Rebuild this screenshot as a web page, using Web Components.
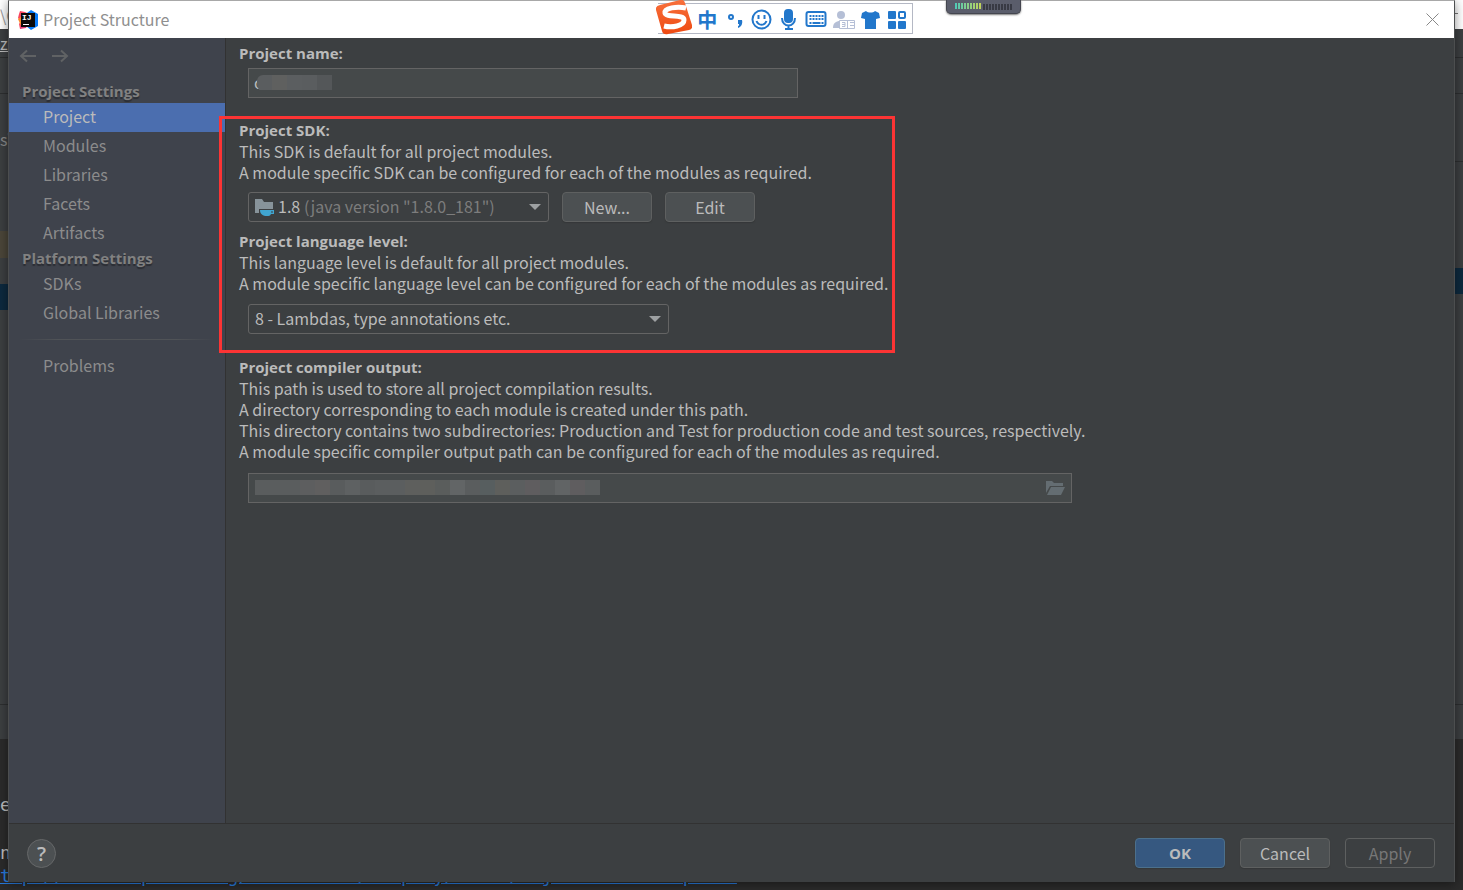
<!DOCTYPE html>
<html lang="en">
<head>
<meta charset="utf-8">
<meta name="viewport" content="width=device-width, initial-scale=1">
<title>Project Structure</title>
<style>
  * {
    box-sizing: border-box;
  }
  html {
    --panel: #3c3f41;
    --sidebar: #3f434c;
    --field: #45494a;
    --line: #646464;
    --rule: #323232;
    --text: #bbbbbb;
    --muted: #8c8c8c;
    --accent: #4b6eaf;
    --heading-font: "Open Sans", "Noto Sans", sans-serif;
  }
  body {
    margin: 0;
    position: relative;
    min-height: 100vh;
    overflow: hidden;
    background: var(--panel);
    color: var(--text);
    font: 16px/21px "Noto Sans CJK SC", "Noto Sans", sans-serif;
  }
</style>
</head>
<body>
<ide-backdrop></ide-backdrop>

<ps-dialog heading="Project Structure">
  <ps-sidebar slot="sidebar">
    <ps-nav-group heading="Project Settings">
      <ps-nav-item selected>Project</ps-nav-item>
      <ps-nav-item>Modules</ps-nav-item>
      <ps-nav-item>Libraries</ps-nav-item>
      <ps-nav-item>Facets</ps-nav-item>
      <ps-nav-item>Artifacts</ps-nav-item>
    </ps-nav-group>
    <ps-nav-group heading="Platform Settings">
      <ps-nav-item>SDKs</ps-nav-item>
      <ps-nav-item>Global Libraries</ps-nav-item>
    </ps-nav-group>
    <ps-nav-item slot="extra">Problems</ps-nav-item>
  </ps-sidebar>

  <ps-project-form></ps-project-form>

  <ps-button slot="actions" kind="primary">OK</ps-button>
  <ps-button slot="actions">Cancel</ps-button>
  <ps-button slot="actions" kind="disabled">Apply</ps-button>
</ps-dialog>

<ime-toolbar></ime-toolbar>
<level-meter></level-meter>

<script>
{
  const html = String.raw;

  // Attaches an open shadow root and fills it with the class's markup
  class ShadowElement extends HTMLElement {
    constructor() {
      super();
      this.attachShadow({ mode: "open" }).innerHTML = html`
        <style>
          *, ::before, ::after { box-sizing: border-box; }
          :host([hidden]) { display: none; }
        </style>
        ${this.render()}
      `;
    }

    render() {
      return "<slot></slot>";
    }
  }

  // The editor window that shows around the dialog's edges
  class IdeBackdrop extends ShadowElement {
    render() {
      return html`
        <style>
          :host {
            position: absolute;
            inset: 0;
            display: flex;
            flex-direction: column;
            overflow: hidden;
            background: #3c3f41;
            white-space: nowrap;
          }
          .title { height: 29px; background: #fff; color: #999; display: flex; justify-content: space-between; line-height: 31px; }
          .min { width: 12px; height: 1px; margin: 13px 5px 0 0; background: #777; }
          .row { border-bottom: 1px solid #2d2f30; }
          .menu { height: 29px; line-height: 28px; text-decoration: underline; }
          .tools { height: 36px; }
          .columns { flex: 1; display: grid; grid-template-columns: 1fr 1fr; }
          .path { height: 137px; padding-top: 35px; color: #888; }
          .brown { height: 27px; background: #4b4639; }
          .blue { height: 26px; background: #0d293e; }
          .gap { height: 26px; }
          .head { height: 68px; border-bottom: 1px solid #2d2f30; }
          .space { height: 106px; }
          .status { height: 35px; border-top: 1px solid #2d2f30; }
          .console {
            height: 151px;
            padding-bottom: 3px;
            background: #2b2b2b;
            font: 18px/24px "DejaVu Sans Mono", monospace;
            display: flex;
            flex-direction: column;
            justify-content: flex-end;
          }
          .console p { margin: 0; }
          .console .output { margin-bottom: 24px; }
          .console a { color: #287bde; line-height: 22px; }
        </style>
        <div class="title"><span>\C</span><i class="min"></i></div>
        <div class="row menu">zo</div>
        <div class="row tools"></div>
        <div class="columns">
          <div>
            <div class="path">s\</div>
            <div class="brown"></div>
            <div class="gap"></div>
            <div class="blue"></div>
          </div>
          <div>
            <div class="head"></div>
            <div class="space"></div>
            <div class="blue"></div>
          </div>
        </div>
        <div class="status"></div>
        <div class="console">
          <p class="output">er</p>
          <p>n</p>
          <a href="#help">ttp://cwiki.apache.org/confluence/display/MAVEN/MojoFailureException</a>
        </div>
      `;
    }
  }

  class PsDialog extends ShadowElement {
    render() {
      return html`
        <style>
          :host {
            position: relative;
            display: flex;
            flex-direction: column;
            min-height: calc(100vh - 8px);
            margin: 0 8px 8px;
            border: 1px solid #4c4e4f;
            border-top-color: #a8a8a8;
            border-bottom: 0;
            background: var(--panel);
            box-shadow: 0 2px 10px rgba(0, 0, 0, 0.45);
          }
          header {
            display: flex;
            align-items: center;
            gap: 5px;
            height: 37px;
            padding: 0 15px 0 9px;
            background: #fff;
            color: #8f8f8f;
          }
          h1 { flex: 1; margin: 0; font-size: inherit; font-weight: 400; }
          .close { display: flex; padding: 0; border: 0; background: none; }
          main { flex: 1; display: flex; }
          .content { flex: 1; min-width: 0; }
          footer {
            display: flex;
            align-items: center;
            gap: 15px;
            padding: 14px 19px 14px 18px;
            border-top: 1px solid var(--rule);
          }
          .help {
            width: 29px;
            height: 29px;
            margin-right: auto;
            padding: 0;
            border: 1px solid #666869;
            border-radius: 50%;
            background: #4c5052;
            color: #bbb;
            font: 600 20px/25px "Open Sans", sans-serif;
          }
        </style>
        <header>
          <svg width="20" height="20" viewBox="0 0 20 20" aria-hidden="true">
            <path d="M1 4 2 1l5 1 4 2-2 10-7 5-1-5 2-3-3-3z" fill="#f9445f"/>
            <path d="M0 9l4-3 3 6-4 4z" fill="#fc8a2c"/>
            <path d="M9 3 13 0l7 4v12l-7 4-5-4z" fill="#087cfa"/>
            <path d="M2 19l1-5h7l-2 4z" fill="#e0407a"/>
            <path d="M3 3h14v14H3z" fill="#0b0b0b"/>
            <text x="4" y="10" font-family="Liberation Mono" font-weight="700" font-size="8" fill="#fff">IJ</text>
            <path d="M5 14.500h6" stroke="#fff" stroke-width="1"/>
          </svg>
          <h1></h1>
          <button class="close" aria-label="Close">
            <svg width="13" height="13" viewBox="0 0 13 13" fill="none" stroke="#888"><path d="M.5.5l12 12M12.500.5l-12 12"/></svg>
          </button>
        </header>
        <main>
          <slot name="sidebar"></slot>
          <div class="content"><slot></slot></div>
        </main>
        <footer>
          <button class="help">?</button>
          <slot name="actions"></slot>
        </footer>
      `;
    }

    connectedCallback() {
      this.shadowRoot.querySelector("h1").textContent = this.getAttribute("heading");
    }
  }

  class PsSidebar extends ShadowElement {
    render() {
      return html`
        <style>
          :host {
            display: block;
            flex: none;
            width: 217px;
            border-right: 1px solid var(--rule);
            background: var(--sidebar);
            color: var(--muted);
          }
          .history { display: flex; gap: 15px; height: 43px; padding: 11px 10px; }
          .history button { display: flex; width: 18px; height: 14px; padding: 0; border: 0; background: none; }
          hr {
            height: 1px;
            margin: 11px 10px 12px;
            border: 0;
            background: linear-gradient(90deg, transparent, #505357 20%, #505357 80%, transparent);
          }
        </style>
        <div class="history">
          <button aria-label="Back">
            <svg width="18" height="14" fill="none" stroke="#606264" stroke-width="2"><path d="M17 7H2M8 1.500 2 7l6 5.500"/></svg>
          </button>
          <button aria-label="Forward">
            <svg width="18" height="14" fill="none" stroke="#606264" stroke-width="2"><path d="M0 7h15M9 1.500 15 7l-6 5.500"/></svg>
          </button>
        </div>
        <nav>
          <slot></slot>
          <hr>
          <slot name="extra"></slot>
        </nav>
      `;
    }
  }

  class PsNavGroup extends ShadowElement {
    render() {
      return html`
        <style>
          :host { display: block; }
          h2 {
            margin: 0;
            padding: 0 0 2px 13px;
            color: #818181;
            font: 700 15px/20px var(--heading-font);
            text-shadow: 0 2px 1px #2b2d33;
          }
        </style>
        <h2></h2>
        <slot></slot>
      `;
    }

    connectedCallback() {
      this.shadowRoot.querySelector("h2").textContent = this.getAttribute("heading");
    }
  }

  class PsNavItem extends ShadowElement {
    render() {
      return html`
        <style>
          :host { display: block; }
          a {
            display: block;
            padding: 0 0 2px 34px;
            color: inherit;
            line-height: 27px;
            text-decoration: none;
          }
          :host([selected]) a { background: var(--accent); color: #bbb; }
        </style>
        <a href="#"><slot></slot></a>
      `;
    }
  }

  class PsButton extends ShadowElement {
    render() {
      return html`
        <style>
          :host { display: block; }
          button {
            width: 90px;
            height: 30px;
            padding: 0;
            border: 1px solid #5e6060;
            border-radius: 4px;
            background: #4c5052;
            box-shadow: 0 1px 1px #353739;
            color: var(--text);
            font: inherit;
          }
          :host([kind="primary"]) button {
            border-color: #4c708c;
            background: #365880;
            font: 700 15px/21px var(--heading-font);
          }
          :host([kind="disabled"]) button {
            background: none;
            box-shadow: none;
            color: #777;
          }
        </style>
        <button><slot></slot></button>
      `;
    }

    connectedCallback() {
      this.shadowRoot.querySelector("button").disabled = this.getAttribute("kind") === "disabled";
    }
  }

  // A drop-down; the "icon" slot goes before the value and the "detail" slot after it
  class PsCombo extends ShadowElement {
    render() {
      return html`
        <style>
          :host { display: grid; height: 30px; align-items: center; }
          select, .over, .arrow { grid-area: 1 / 1; }
          select {
            appearance: none;
            width: 100%;
            height: 30px;
            padding: 0 30px 2px var(--inset, 6px);
            border: 1px solid var(--line);
            border-radius: 3px;
            background: none;
            color: var(--text);
            font: inherit;
          }
          .over { display: flex; align-items: center; gap: 29px; padding-left: 7px; pointer-events: none; color: #7d7d7d; }
          .over ::slotted(span) { padding-bottom: 2px; }
          .arrow { justify-self: end; margin-right: 8px; pointer-events: none; }
        </style>
        <select></select>
        <span class="over"><slot name="icon"></slot><slot name="detail"></slot></span>
        <svg class="arrow" width="12" height="6"><path d="M0 0h12L6 6z" fill="#9da0a2"/></svg>
      `;
    }

    connectedCallback() {
      const select = this.shadowRoot.querySelector("select");
      select.setAttribute("aria-label", this.getAttribute("label"));
      select.add(new Option(this.getAttribute("value")));
    }
  }

  // A text box whose value is covered by a row of mosaic tiles
  class PsField extends ShadowElement {
    render() {
      return html`
        <style>
          :host { display: grid; align-items: center; }
          input, .over { grid-area: 1 / 1; }
          input {
            width: 100%;
            height: 30px;
            padding: 0 5px 2px;
            border: 1px solid var(--line);
            background: var(--field);
            color: var(--text);
            font: inherit;
          }
          .over {
            display: flex;
            align-items: center;
            justify-content: space-between;
            padding: 0 7px;
            pointer-events: none;
          }
          .tiles { display: flex; padding-bottom: 1px; }
          .tiles.partial { margin-left: 2px; border-radius: 6px 0 0 6px; overflow: hidden; }
          .tiles i { width: 15px; height: 15px; }
        </style>
        <input type="text">
        <div class="over">
          <span class="tiles"></span>
          <slot></slot>
        </div>
      `;
    }

    connectedCallback() {
      const input = this.shadowRoot.querySelector("input");
      const tiles = this.shadowRoot.querySelector(".tiles");
      input.value = this.getAttribute("value") || "";
      input.setAttribute("aria-label", this.getAttribute("label"));
      tiles.classList.toggle("partial", input.value !== "");
      for (const color of this.getAttribute("tiles").split(" ")) {
        const tile = document.createElement("i");
        tile.style.background = "#" + color;
        tiles.append(tile);
      }
    }
  }

  class PsSection extends ShadowElement {
    render() {
      return html`
        <style>
          :host { display: block; }
          h3 { margin: 0; font: 700 15px/21px var(--heading-font); }
          .controls { display: flex; gap: 13px; padding: var(--control-gap, 9px) 0 0 9px; }
        </style>
        <h3></h3>
        <slot></slot>
        <div class="controls"><slot name="controls"></slot></div>
      `;
    }

    connectedCallback() {
      this.shadowRoot.querySelector("h3").textContent = this.getAttribute("heading");
    }
  }

  class PsProjectForm extends ShadowElement {
    render() {
      return html`
        <style>
          :host { display: flex; flex-direction: column; gap: 22px; padding: 5px 13px; }
          p { margin: 0; }
          .name { --control-gap: 4px; }
          .name ps-field { width: 550px; }
          .marked { position: relative; display: grid; gap: 9px; width: fit-content; padding-bottom: 1px; }
          .marked::after {
            content: "";
            position: absolute;
            inset: -4px -7px -18px -20px;
            border: 3px solid #fc3434;
            pointer-events: none;
          }
          .sdk { --inset: 29px; width: 301px; }
          .language { --control-gap: 10px; }
          .level { width: 421px; }
          .output { --control-gap: 11px; }
          .output ps-field { width: 824px; }
          svg { display: block; }
        </style>
        <ps-section class="name" heading="Project name:">
          <ps-field slot="controls" label="Project name" value="c" tiles="5a5d5f 5f605f 5b5e60 5a5d5f 545759"></ps-field>
        </ps-section>
        <div class="marked">
          <ps-section heading="Project SDK:">
            <p>
              This SDK is default for all project modules.<br>
              A module specific SDK can be configured for each of the modules as required.
            </p>
            <ps-combo slot="controls" class="sdk" label="Project SDK" value="1.8">
              <svg slot="icon" width="20" height="18" viewBox="0 0 20 18">
                <path d="M0 1h7l2 3h9v7H4v4H0z" fill="#87939a"/>
                <path d="M5 12h14v4h-3c-1 2-2 2-4 2-4 0-7-2-7-6z" fill="#40a5d0"/>
                <path d="M16 13.500h2v1h-2z" fill="#3c3f41"/>
              </svg>
              <span slot="detail">(java version "1.8.0_181")</span>
            </ps-combo>
            <ps-button slot="controls">New...</ps-button>
            <ps-button slot="controls">Edit</ps-button>
          </ps-section>
          <ps-section class="language" heading="Project language level:">
            <p>
              This language level is default for all project modules.<br>
              A module specific language level can be configured for each of the modules as required.
            </p>
            <ps-combo slot="controls" class="level" label="Project language level" value="8 - Lambdas, type annotations etc."></ps-combo>
          </ps-section>
        </div>
        <ps-section class="output" heading="Project compiler output:">
          <p>
            This path is used to store all project compilation results.<br>
            A directory corresponding to each module is created under this path.<br>
            This directory contains two subdirectories: Production and Test for production code and test sources, respectively.<br>
            A module specific compiler output path can be configured for each of the modules as required.
          </p>
          <ps-field slot="controls" label="Project compiler output"
            tiles="5a5d5e 5a5d5e 5a5d5e 5d5e5f 605f5f 595c5d 5e6162 595c5d 5b5e5f 5b5e5f 5e5f5d 5e5f5c 5a5d5c 626566 5a5d5e 575e5f 5e5f5c 5b5e5f 5f5d5f 5a5d5e 616465 5f5d5f 5a5d5e">
            <svg width="19" height="14" viewBox="0 0 19 14" fill="#646d72">
              <path d="M0 0h6l2 2h9v3H4L0 12z"/>
              <path d="M5 6h14l-4 8H1z"/>
            </svg>
          </ps-field>
        </ps-section>
      `;
    }
  }

  // Floating input-method bar over the title bar
  class ImeToolbar extends ShadowElement {
    render() {
      return html`
        <style>
          :host {
            position: absolute;
            top: 3px;
            left: 45%;
            display: flex;
            align-items: center;
            gap: 6px;
            width: 255px;
            height: 31px;
            padding: 2px 6px 0 0;
            border: 1px solid #b4b8c4;
            border-left: 0;
            background: #fff;
            color: #2277cb;
          }
          svg { display: block; flex: none; }
          .logo { margin: -7px -1px -3px -2px; }
          .lang { width: 21px; font: 700 20px/24px "Noto Sans CJK SC", sans-serif; }
          .menu { margin-left: auto; }
        </style>
        <svg class="logo" width="36" height="35" viewBox="0 0 36 35">
          <defs>
            <linearGradient id="flame" x2="0" y2="1"><stop stop-color="#f8703c"/><stop offset="1" stop-color="#ee4a12"/></linearGradient>
          </defs>
          <path d="M4 5 24 0q4-1 5 3l7 22q1 4-3 5L12 34q-5 1-6-3L0 10q-1-4 4-5z" fill="url(#flame)"/>
          <path d="M30 8C21 6 8 8 9 13c1 5 19 1 19 7 0 6-12 8-20 6" fill="none" stroke="#fff" stroke-width="5"/>
        </svg>
        <span class="lang">中</span>
        <svg width="21" height="20" fill="none" stroke="#2277cb" stroke-width="2">
          <circle cx="7" cy="7" r="2"/>
          <path d="M14 10h4c1 4-1 7-4 8v-2c1 0 1-1 1-2h-1z" fill="#2277cb" stroke="none"/>
        </svg>
        <svg width="21" height="21" fill="none" stroke="#2277cb" stroke-width="2">
          <circle cx="10.500" cy="10.500" r="9"/>
          <path d="M7.500 6v4M13.500 6v4M5.500 12c2 5 8 5 10 0"/>
        </svg>
        <svg width="21" height="21" fill="none" stroke="#2277cb" stroke-width="2">
          <rect x="7" y="1" width="7" height="12" rx="3" fill="#2277cb"/>
          <path d="M4 9c0 10 13 10 13 0M10.500 16v4M7 20h8"/>
        </svg>
        <svg width="22" height="17" viewBox="0 0 21 17" fill="none" stroke="#2277cb" stroke-width="2">
          <rect x="1" y="1" width="19" height="14" rx="2"/>
          <path d="M4 5h14M4 8h14" stroke-dasharray="2 1"/>
          <path d="M4 12h2M7 12h8M16 12h2"/>
        </svg>
        <svg width="22" height="20" viewBox="0 0 22 20" fill="#b5bfd6">
          <circle cx="8" cy="5" r="4"/>
          <path d="M0 18c0-5 3-7 7-7v7z"/>
          <path d="M6.500 10.500h15v8h-15zM9 12.500h3v4H9M12 14.500H9M14.500 10.500v8M17 12.500h4M17 15.500h4" fill="#fff" stroke="#b5bfd6"/>
        </svg>
        <svg width="19" height="18" fill="#2277cb">
          <path d="M5 0c2 2 7 2 9 0l4 2 1 5-4 1v10H4V8L0 7l1-5z"/>
        </svg>
        <svg class="menu" width="18" height="18" fill="#2277cb">
          <rect width="8" height="8" rx="1"/>
          <rect y="10" width="8" height="8" rx="1"/>
          <rect x="10" y="10" width="8" height="8" rx="1"/>
          <rect x="11" y="1" width="6" height="6" rx="1" fill="none" stroke="#2277cb" stroke-width="2"/>
        </svg>
      `;
    }
  }

  class LevelMeter extends ShadowElement {
    render() {
      return html`
        <style>
          :host {
            position: absolute;
            top: 0;
            right: 442px;
            display: block;
            width: 75px;
            height: 14px;
            padding: 3px 8px;
            border: 1px solid #44464f;
            border-top: 0;
            border-radius: 0 0 5px 5px;
            background: #5a5d6b;
            box-shadow: 0 1px 2px #777;
          }
          svg { display: block; }
        </style>
        <svg width="58" height="7" fill="none" stroke-width="6" stroke-dasharray="2 1">
          <defs>
            <linearGradient id="level" gradientUnits="userSpaceOnUse" x1="0" x2="28"><stop stop-color="#4fc9b8"/><stop offset="1" stop-color="#cbd552"/></linearGradient>
          </defs>
          <path d="M0 3h27" stroke="url(#level)"/>
          <path d="M28 4h29" stroke="#383a44"/>
        </svg>
      `;
    }
  }

  customElements.define("ide-backdrop", IdeBackdrop);
  customElements.define("ps-dialog", PsDialog);
  customElements.define("ps-sidebar", PsSidebar);
  customElements.define("ps-nav-group", PsNavGroup);
  customElements.define("ps-nav-item", PsNavItem);
  customElements.define("ps-button", PsButton);
  customElements.define("ps-combo", PsCombo);
  customElements.define("ps-field", PsField);
  customElements.define("ps-section", PsSection);
  customElements.define("ps-project-form", PsProjectForm);
  customElements.define("ime-toolbar", ImeToolbar);
  customElements.define("level-meter", LevelMeter);
}
</script>
</body>
</html>
